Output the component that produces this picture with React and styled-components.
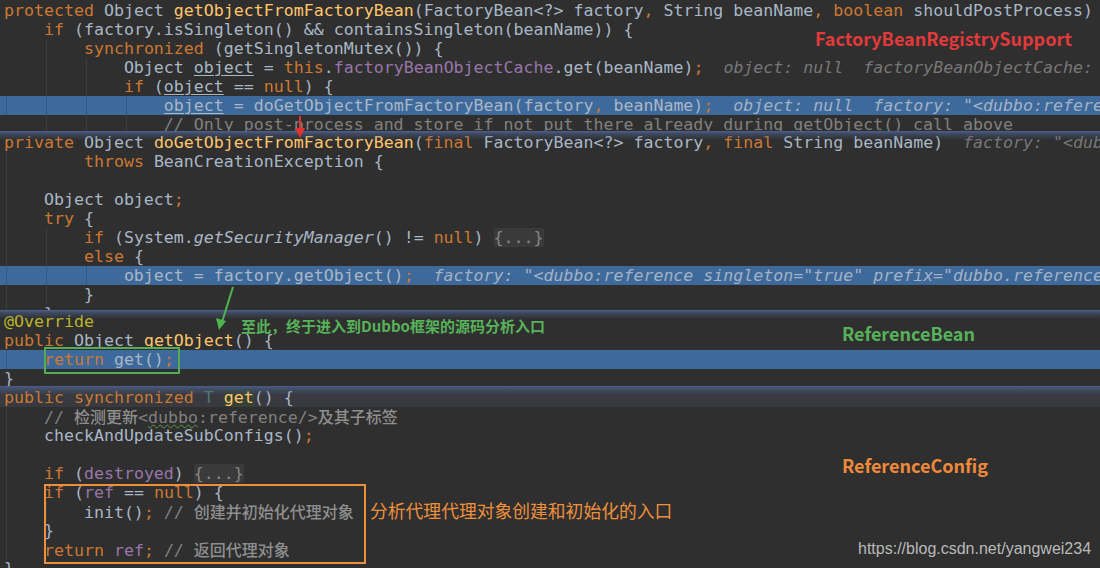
import React from 'react';
import styled, { createGlobalStyle, css } from 'styled-components';

const GlobalStyle = createGlobalStyle`
  html, body { margin: 0; padding: 0; background: #2f2f2f; }
`;

const Screen = styled.div`
  position: relative;
  width: 1100px;
  height: 568px;
  overflow: hidden;
  background: #2f2f2f;
  display: flex;
  flex-direction: column;
  font-family: "DejaVu Sans Mono", "Noto Sans CJK SC", monospace;
  font-size: 16.6px;
  color: #a9b7c6;
`;

const Panel = styled.section`
  position: relative;
  flex: none;
  height: ${p => p.$h}px;
  box-sizing: border-box;
  overflow: hidden;
  padding-top: ${p => p.$pad}px;
  ${p => p.$edge && css`
    &::after {
      content: '';
      position: absolute;
      left: 0;
      right: 0;
      top: 0;
      height: 9px;
      background: linear-gradient(to bottom, rgba(78,100,148,0.95) 0, rgba(78,100,148,0.45) 3px, rgba(78,100,148,0) 100%);
      pointer-events: none;
    }
  `}
`;

const Line = styled.div`
  position: relative;
  height: 19px;
  line-height: 19px;
  padding-left: 4px;
  white-space: pre;
  background: ${p => (p.$hl ? '#3e699b' : p.$caret ? '#383a40' : 'transparent')};
`;

const Guide = styled.span`
  position: absolute;
  top: 0;
  bottom: 0;
  left: ${p => 6 + p.$level * 40}px;
  width: 1px;
  background: ${p => (p.$hl ? '#33598a' : '#3d3d3d')};
`;

const tokenStyles = {
  p: css`color: #a9b7c6;`,
  k: css`color: #cc7832;`,
  m: css`color: #ffc66d;`,
  f: css`color: #9876aa;`,
  c: css`color: #808080;`,
  cj: css`color: #8e8e8e; font-family: "Noto Sans CJK SC", sans-serif; font-size: 16px; font-weight: 500;`,
  d: css`color: #777777; font-style: italic;`,
  dh: css`color: #a3b2c5; font-style: italic;`,
  i: css`color: #a9b7c6; font-style: italic;`,
  u: css`color: #a9b7c6; text-decoration: underline; text-underline-offset: 2px;`,
  a: css`color: #bbb529;`,
  t: css`color: #507874;`,
  g: css`color: #ffc66d; background: #344134;`,
  w: css`color: #808080; text-decoration: underline wavy #5f9c41; text-underline-offset: 1px; text-decoration-thickness: 1px;`,
  fold: css`color: #878787; background: #3a3a3a; border-radius: 2px;`,
};

const Tok = styled.span`
  ${p => tokenStyles[p.$t]}
`;

const Note = styled.div`
  position: absolute;
  left: ${p => p.$x}px;
  top: ${p => p.$y}px;
  transform: translateY(-50%);
  white-space: nowrap;
  line-height: 1;
  font-family: "Noto Sans CJK SC", "Noto Sans", sans-serif;
  font-size: ${p => p.$size}px;
  font-weight: ${p => p.$weight};
  color: ${p => p.$color};
`;

const Watermark = styled.div`
  position: absolute;
  left: 858px;
  top: 540px;
  font-family: "Liberation Sans", Arial, sans-serif;
  font-size: 16px;
  line-height: 18px;
  color: rgba(220, 220, 220, 0.82);
  white-space: nowrap;
`;

const Frame = styled.div`
  position: absolute;
  left: ${p => p.$x}px;
  top: ${p => p.$y}px;
  width: ${p => p.$w}px;
  height: ${p => p.$h}px;
  box-sizing: border-box;
  border: 2px solid ${p => p.$color};
  pointer-events: none;
`;

const ArrowSvg = styled.svg`
  position: absolute;
  left: 0;
  top: 0;
  width: 1100px;
  height: 568px;
  pointer-events: none;
  overflow: visible;
`;

const panels = [
  {
    h: 131,
    pad: 1,
    edge: false,
    lines: [
      { t: [['k', 'protected'], ['p', ' Object '], ['m', 'getObjectFromFactoryBean'], ['p', '(FactoryBean<?> factory'], ['k', ', '], ['p', 'String beanName'], ['k', ', boolean '], ['p', 'shouldPostProcess)']] },
      { t: [['p', '    '], ['k', 'if'], ['p', ' (factory.isSingleton() && containsSingleton(beanName)) {']] },
      { g: [1], t: [['p', '        '], ['k', 'synchronized'], ['p', ' (getSingletonMutex()) {']] },
      { g: [1, 2], t: [['p', '            Object '], ['u', 'object'], ['p', ' = '], ['k', 'this'], ['p', '.'], ['f', 'factoryBeanObjectCache'], ['p', '.get(beanName)'], ['k', ';'], ['d', '  object: null  factoryBeanObjectCache: ']] },
      { g: [1, 2], t: [['p', '            '], ['k', 'if'], ['p', ' ('], ['u', 'object'], ['p', ' == '], ['k', 'null'], ['p', ') {']] },
      { hl: true, g: [0, 1, 2, 3], t: [['p', '                '], ['u', 'object'], ['p', ' = doGetObjectFromFactoryBean(factory'], ['k', ', '], ['p', 'beanName)'], ['k', ';'], ['dh', '  object: null  factory: "<dubbo:reference singleton="true"']] },
      { g: [1, 2, 3], t: [['c', '                // Only post-process and store if not put there already during getObject() call above']] },
    ],
  },
  {
    h: 179,
    pad: 2,
    edge: true,
    lines: [
      { t: [['k', 'private'], ['p', ' Object '], ['m', 'doGetObjectFromFactoryBean'], ['p', '('], ['k', 'final'], ['p', ' FactoryBean<?> factory'], ['k', ', final'], ['p', ' String beanName)'], ['d', '  factory: "<dubbo:reference singleton="true"']] },
      { g: [0], t: [['p', '        '], ['k', 'throws'], ['p', ' BeanCreationException {']] },
      { g: [0], t: [['p', ' ']] },
      { g: [0], t: [['p', '    Object object'], ['k', ';']] },
      { g: [0], t: [['p', '    '], ['k', 'try'], ['p', ' {']] },
      { g: [0, 1], t: [['p', '        '], ['k', 'if'], ['p', ' (System.'], ['i', 'getSecurityManager'], ['p', '() != '], ['k', 'null'], ['p', ') '], ['fold', '{...}']] },
      { g: [0, 1], t: [['p', '        '], ['k', 'else'], ['p', ' {']] },
      { hl: true, g: [0, 1, 2], t: [['p', '            object = factory.getObject()'], ['k', ';'], ['dh', '  factory: "<dubbo:reference singleton="true" prefix="dubbo.reference" id="demoService"']] },
      { g: [0, 1], t: [['p', '        }']] },
      { g: [0], t: [['p', '    }']] },
    ],
  },
  {
    h: 76,
    pad: 2,
    edge: true,
    lines: [
      { t: [['a', '@Override']] },
      { t: [['k', 'public'], ['p', ' Object '], ['m', 'getObject'], ['p', '() {']] },
      { hl: true, g: [0], t: [['p', '    '], ['k', 'return'], ['p', ' get()'], ['k', ';']] },
      { t: [['p', '}']] },
    ],
  },
  {
    h: 182,
    pad: 2,
    edge: true,
    lines: [
      { caret: true, t: [['k', 'public synchronized '], ['t', 'T'], ['p', ' '], ['g', 'get'], ['p', '() {']] },
      { g: [0], t: [['c', '    // '], ['cj', '检测更新'], ['c', '<'], ['w', 'dubbo'], ['c', ':reference/>'], ['cj', '及其子标签']] },
      { g: [0], t: [['p', '    checkAndUpdateSubConfigs()'], ['k', ';']] },
      { g: [0], t: [['p', ' ']] },
      { g: [0], t: [['p', '    '], ['k', 'if'], ['p', ' ('], ['f', 'destroyed'], ['p', ') '], ['fold', '{...}']] },
      { g: [0], t: [['p', '    '], ['k', 'if'], ['p', ' ('], ['f', 'ref'], ['p', ' == '], ['k', 'null'], ['p', ') {']] },
      { g: [0, 1], t: [['p', '        init()'], ['k', ';'], ['c', ' // '], ['cj', '创建并初始化代理对象']] },
      { g: [0], t: [['p', '    }']] },
      { g: [0], t: [['p', '    '], ['k', 'return '], ['f', 'ref'], ['k', ';'], ['c', ' // '], ['cj', '返回代理对象']] },
      { t: [['p', '}']] },
    ],
  },
];

function CodeLine({ line }) {
  return (
    <Line $hl={line.hl} $caret={line.caret}>
      {(line.g || []).map(level => (
        <Guide key={level} $level={level} $hl={line.hl} />
      ))}
      {line.t.map(([type, text], i) => (
        <Tok key={i} $t={type}>{text}</Tok>
      ))}
    </Line>
  );
}

export default function App() {
  return (
    <>
      <GlobalStyle />
      <Screen>
        {panels.map((panel, i) => (
          <Panel key={i} $h={panel.h} $pad={panel.pad} $edge={panel.edge}>
            {panel.lines.map((line, j) => (
              <CodeLine key={j} line={line} />
            ))}
          </Panel>
        ))}

        <Note $x={815} $y={38} $size={18} $weight={700} $color="#e23a3a">FactoryBeanRegistrySupport</Note>
        <Note $x={842} $y={333} $size={18} $weight={700} $color="#57b25a">ReferenceBean</Note>
        <Note $x={842} $y={465} $size={18} $weight={700} $color="#ee8a3a">ReferenceConfig</Note>
        <Note $x={241} $y={325} $size={15} $weight={700} $color="#57b25a">至此，终于进入到Dubbo框架的源码分析入口</Note>
        <Note $x={370} $y={511} $size={17.8} $weight={400} $color="#f0903c">分析代理代理对象创建和初始化的入口</Note>

        <Frame $x={44} $y={347} $w={136} $h={27} $color="#52ad55" />
        <Frame $x={44} $y={484} $w={322} $h={80} $color="#ef8e3c" />

        <ArrowSvg viewBox="0 0 1100 568">
          <line x1="300" y1="116" x2="300" y2="130" stroke="#e0322f" strokeWidth="2" />
          <polygon points="295,128 305,128 300,138" fill="#e0322f" />
          <line x1="233" y1="287" x2="222" y2="322" stroke="#4fb553" strokeWidth="2" />
          <polygon points="216,318 226,321 219,330" fill="#4fb553" />
        </ArrowSvg>

        <Watermark>https://blog.csdn.net/yangwei234</Watermark>
      </Screen>
    </>
  );
}
